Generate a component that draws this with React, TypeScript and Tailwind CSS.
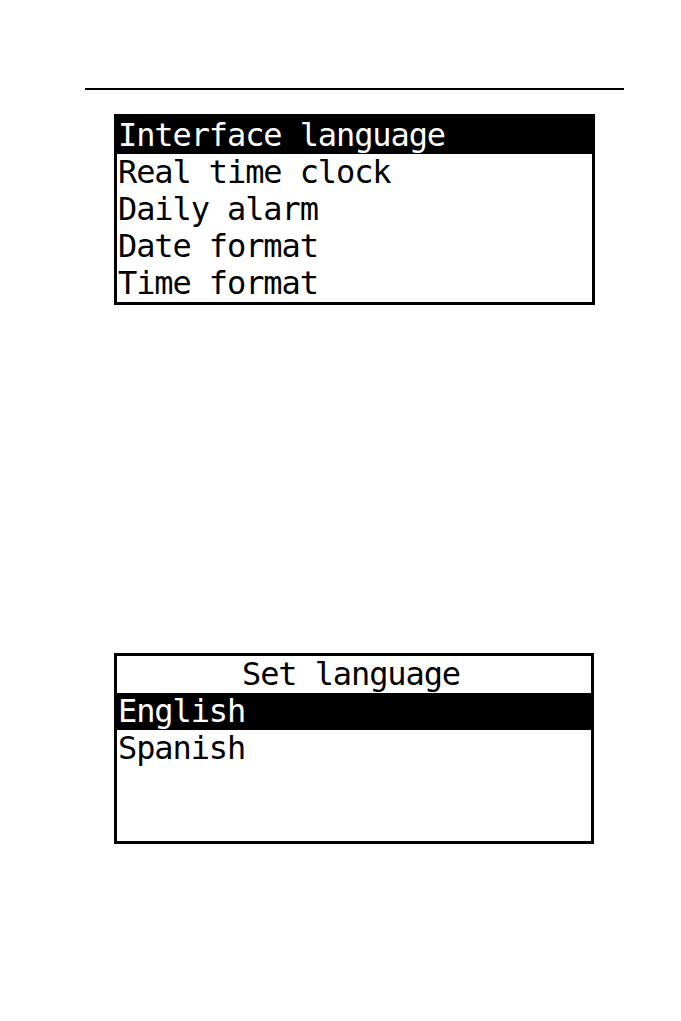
const mono = { fontFamily: '"DejaVu Sans Mono", "Liberation Mono", monospace' };

const Row = ({ label, active = false, center = false }: { label: string; active?: boolean; center?: boolean }) => (
  <div
    className={`h-[37px] leading-[37px] text-[32px] whitespace-nowrap pl-[1px] tracking-[-1.1px] ${
      active ? "bg-black text-white" : "bg-white text-black"
    } ${center ? "text-center pr-[7px]" : ""}`}
  >
    {label}
  </div>
);

export default function App() {
  return (
    <div className="w-[681px] h-[1021px] bg-white overflow-hidden" style={mono}>
      {/* header rule */}
      <div className="ml-[85px] pt-[88px]">
        <div className="w-[539px] h-[2px] bg-black" />
      </div>

      {/* main menu */}
      <div className="ml-[114px] mt-[24px] w-[481px] border-[3px] border-black">
        <Row label="Interface language" active />
        <Row label="Real time clock" />
        <Row label="Daily alarm" />
        <Row label="Date format" />
        <Row label="Time format" />
      </div>

      {/* language submenu */}
      <div className="ml-[114px] mt-[348px] w-[480px] border-[3px] border-black">
        <Row label="Set language" center />
        <Row label="English" active />
        <Row label="Spanish" />
        <Row label="" />
        <Row label="" />
      </div>
    </div>
  );
}
